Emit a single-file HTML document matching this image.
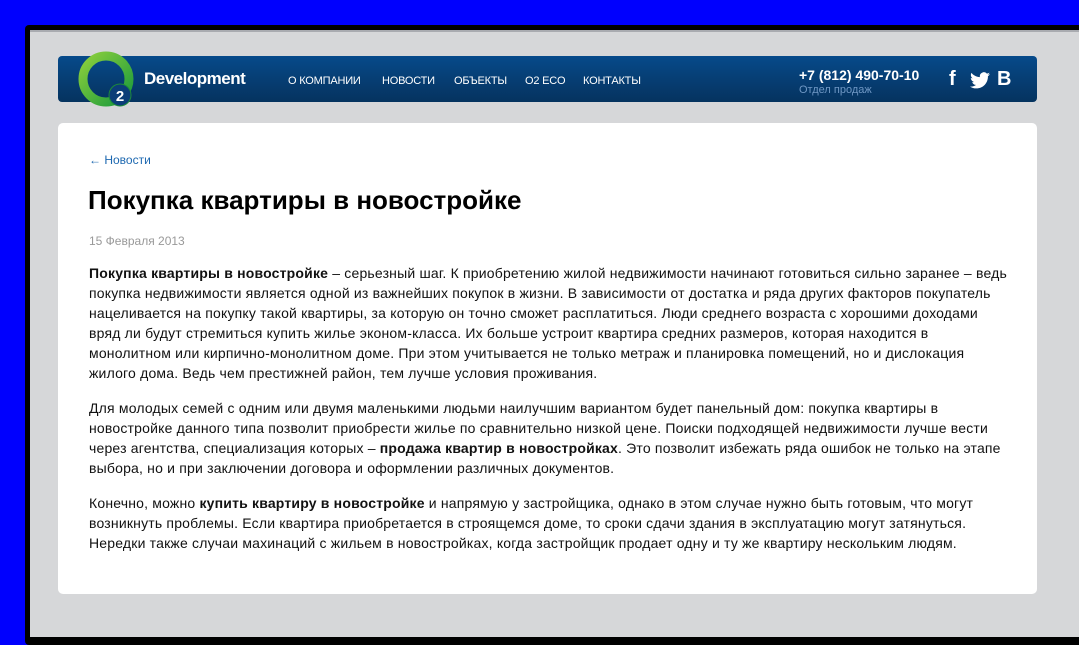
<!DOCTYPE html>
<html><head><meta charset="utf-8"><style>
*{margin:0;padding:0;box-sizing:border-box}
html,body{width:1079px;height:637px;overflow:hidden;background:#0000fe;font-family:"Liberation Sans",Arial,sans-serif}
.shadow{position:absolute;left:25px;top:25px;width:1060px;height:620px;background:#000;border-radius:4px}
.page{position:absolute;left:30px;top:30px;width:1049px;height:607px;background:#d6d7d9;border-top:2px solid #a9abb0}
.bar{position:absolute;left:28px;top:24px;width:979px;height:46px;border-radius:4px;background:linear-gradient(#064a8b,#063e74 50%,#05335f)}
.logo{position:absolute;left:48px;top:19px;width:58px;height:58px}
.dev{position:absolute;left:114px;top:37px;color:#fff;font-size:17px;font-weight:bold;letter-spacing:-0.5px}
.nav{position:absolute;top:43px;color:#fff;font-size:11px;letter-spacing:-0.2px}
.phone{position:absolute;left:769px;top:35px;color:#fff;font-size:14px;font-weight:bold}
.sub{position:absolute;left:769px;top:52px;color:#6f97c4;font-size:11px}
.soc{position:absolute;top:36px;color:#fff;font-weight:bold;font-size:20px}
.card{position:absolute;left:28px;top:91px;width:979px;height:471px;background:#fff;border-radius:5px}
.back{position:absolute;left:31px;top:30px;color:#1d68b0;font-size:12px}
h1{position:absolute;left:30px;top:62px;font-size:26px;font-weight:bold;color:#000}
.date{position:absolute;left:31px;top:111px;color:#999;font-size:12px}
.txt{position:absolute;left:31px;top:140px;width:940px;font-size:14px;line-height:20px;color:#111;letter-spacing:0.19px}
.txt p{margin-bottom:15px;white-space:nowrap}
</style></head><body>
<div class="shadow"></div>
<div class="page">
<div class="bar"></div>
<svg class="logo" viewBox="0 0 58 58"><defs><linearGradient id="g" x1="0" y1="0" x2="1" y2="1"><stop offset="0" stop-color="#8ccf3c"/><stop offset="1" stop-color="#1a9a3c"/></linearGradient></defs>
<circle cx="28" cy="28" r="23" fill="none" stroke="url(#g)" stroke-width="9"/>
<circle cx="42" cy="44" r="11" fill="#0b3d78" stroke="#1d8a3a" stroke-width="1"/>
<text x="42" y="50" text-anchor="middle" fill="#fff" font-size="15" font-weight="bold" font-family="Liberation Sans">2</text></svg>
<div class="dev">Development</div>
<div class="nav" style="left:258px">О КОМПАНИИ</div>
<div class="nav" style="left:352px">НОВОСТИ</div>
<div class="nav" style="left:424px">ОБЪЕКТЫ</div>
<div class="nav" style="left:495px">O2 ECO</div>
<div class="nav" style="left:553px">КОНТАКТЫ</div>
<div class="phone">+7 (812) 490-70-10</div>
<div class="sub">Отдел продаж</div>
<div class="soc" style="left:919px">f</div>
<svg style="position:absolute;left:940px;top:40px" width="20" height="17" viewBox="0 0 24 20"><path fill="#fff" d="M24 2.4c-.9.4-1.8.6-2.8.8 1-.6 1.8-1.6 2.2-2.7-1 .6-2 1-3.1 1.2A4.9 4.9 0 0 0 11.9 6C7.8 5.8 4.2 3.9 1.7.9c-1.300 2.3-.6 5.1 1.5 6.6-.8 0-1.6-.2-2.200-.6 0 2.4 1.7 4.4 3.9 4.9-.7.2-1.5.2-2.2.1.6 2 2.4 3.4 4.6 3.4A9.9 9.9 0 0 1 0 17.3 14 14 0 0 0 7.5 19.5c9.1 0 14.3-7.7 14-14.6 1-.7 1.8-1.5 2.5-2.5z"/></svg>
<div class="soc" style="left:967px">B</div>
<div class="card">
<div class="back">← Новости</div>
<h1>Покупка квартиры в новостройке</h1>
<div class="date">15 Февраля 2013</div>
<div class="txt">
<p><b>Покупка квартиры в новостройке</b> – серьезный шаг. К приобретению жилой недвижимости начинают готовиться сильно заранее – ведь<br>покупка недвижимости является одной из важнейших покупок в жизни. В зависимости от достатка и ряда других факторов покупатель<br>нацеливается на покупку такой квартиры, за которую он точно сможет расплатиться. Люди среднего возраста с хорошими доходами<br>вряд ли будут стремиться купить жилье эконом-класса. Их больше устроит квартира средних размеров, которая находится в<br>монолитном или кирпично-монолитном доме. При этом учитывается не только метраж и планировка помещений, но и дислокация<br>жилого дома. Ведь чем престижней район, тем лучше условия проживания.</p>
<p>Для молодых семей с одним или двумя маленькими людьми наилучшим вариантом будет панельный дом: покупка квартиры в<br>новостройке данного типа позволит приобрести жилье по сравнительно низкой цене. Поиски подходящей недвижимости лучше вести<br>через агентства, специализация которых – <b>продажа квартир в новостройках</b>. Это позволит избежать ряда ошибок не только на этапе<br>выбора, но и при заключении договора и оформлении различных документов.</p>
<p>Конечно, можно <b>купить квартиру в новостройке</b> и напрямую у застройщика, однако в этом случае нужно быть готовым, что могут<br>возникнуть проблемы. Если квартира приобретается в строящемся доме, то сроки сдачи здания в эксплуатацию могут затянуться.<br>Нередки также случаи махинаций с жильем в новостройках, когда застройщик продает одну и ту же квартиру нескольким людям.</p>
</div>
</div>
</div>
</body></html>
